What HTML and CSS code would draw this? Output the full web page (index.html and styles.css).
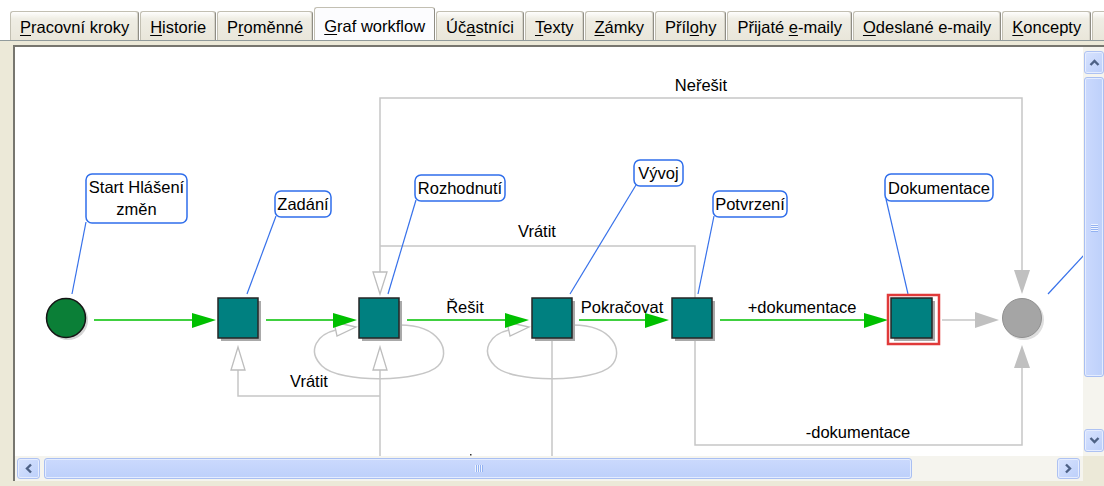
FILE: index.html
```html
<!DOCTYPE html>
<html lang="cs">
<head>
    <meta charset="UTF-8">
    <title>Graf workflow</title>
    <link rel="stylesheet" href="styles.css">
</head>
<body>
    <div class="tabs">
        <div class="tab"><u>P</u>racovní kroky</div>
        <div class="tab"><u>H</u>istorie</div>
        <div class="tab">P<u>r</u>oměnné</div>
        <div class="tab tab-active"><u>G</u>raf workflow</div>
        <div class="tab">Úč<u>a</u>stníci</div>
        <div class="tab"><u>T</u>exty</div>
        <div class="tab"><u>Z</u>ámky</div>
        <div class="tab">Příl<u>o</u>hy</div>
        <div class="tab">Přijaté <u>e</u>-maily</div>
        <div class="tab"><u>O</u>deslané e-maily</div>
        <div class="tab"><u>K</u>oncepty</div>
        <div class="tab tab-cut"></div>
    </div>

    <div class="panel">
        <div class="view">
            <div class="canvas">
                <!-- viewBox uses page coordinates: canvas starts at 15,47 -->
                <svg width="1068" height="409" viewBox="15 47 1068 409" font-family="Liberation Sans, Arial, sans-serif" font-size="16.5">
                    <!-- grey transitions -->
                    <g class="edge-grey" fill="none">
                        <path d="M380 272 V98 H1022 V270"/>
                        <path d="M695 298 V246 H380"/>
                        <path d="M380 456 V370"/>
                        <path d="M380 396 H238 V370"/>
                        <path d="M552 340 V456"/>
                        <path d="M695 340 V445 H1022 V368"/>
                        <path d="M942 320 H976"/>
                        <path d="M400 325 C440 325 452 352 438 366 C422 382 340 384 322 366 C306 350 318 334 336 330"/>
                        <path d="M573 325 C613 325 625 352 611 366 C595 382 513 384 495 366 C479 350 491 334 509 330"/>
                    </g>
                    <g class="head-open">
                        <polygon points="373,272 387,272 380,294"/>
                        <polygon points="373,370 387,370 380,347"/>
                        <polygon points="231,370 245,370 238,347"/>
                        <polygon points="334,322 356,327 337,336"/>
                        <polygon points="507,322 529,327 510,336"/>
                    </g>
                    <g class="head-grey">
                        <polygon points="1014,270 1030,270 1022,294"/>
                        <polygon points="1014,368 1030,368 1022,345"/>
                        <polygon points="975,312 975,328 999,320"/>
                    </g>

                    <!-- green transitions -->
                    <g class="edge-green">
                        <path d="M94 320 H194"/>
                        <path d="M266 320 H336"/>
                        <path d="M407 320 H508"/>
                        <path d="M579 320 H648"/>
                        <path d="M720 320 H866"/>
                    </g>
                    <g class="head-green">
                        <polygon points="192,313 216,320 192,328"/>
                        <polygon points="333,313 357,320 333,328"/>
                        <polygon points="505,313 529,320 505,328"/>
                        <polygon points="645,313 669,320 645,328"/>
                        <polygon points="864,313 888,320 864,328"/>
                    </g>

                    <!-- label leaders -->
                    <g class="leader">
                        <path d="M86 222 L72 294"/>
                        <path d="M276 216 L247 294"/>
                        <path d="M416 200 L388 294"/>
                        <path d="M636 185 L570 294"/>
                        <path d="M714 216 L698 294"/>
                        <path d="M886 199 L908 294"/>
                        <path d="M1048 294 L1084 255"/>
                    </g>

                    <!-- nodes -->
                    <circle cx="68" cy="320" r="20" fill="#d4d4d4"/>
                    <circle cx="66" cy="318" r="19.5" class="node-start"/>

                    <rect x="221" y="301" width="40" height="40" class="shadow"/>
                    <rect x="218" y="298" width="40" height="40" class="node"/>
                    <rect x="362" y="301" width="40" height="40" class="shadow"/>
                    <rect x="359" y="298" width="40" height="40" class="node"/>
                    <rect x="535" y="301" width="40" height="40" class="shadow"/>
                    <rect x="532" y="298" width="40" height="40" class="node"/>
                    <rect x="675" y="301" width="40" height="40" class="shadow"/>
                    <rect x="672" y="298" width="40" height="40" class="node"/>

                    <rect x="888" y="295" width="51" height="49" class="selected"/>
                    <rect x="894" y="301" width="41" height="40" class="shadow"/>
                    <rect x="891" y="298" width="41" height="40" class="node"/>

                    <circle cx="1024" cy="320" r="20" fill="#dedede"/>
                    <circle cx="1022" cy="318" r="19.5" class="node-end"/>

                    <!-- callouts -->
                    <g class="callout">
                        <rect x="86" y="174" width="101" height="49" rx="6"/>
                        <rect x="275" y="191" width="56" height="26" rx="6"/>
                        <rect x="415" y="175" width="90" height="26" rx="6"/>
                        <rect x="634" y="160" width="49" height="26" rx="6"/>
                        <rect x="713" y="191" width="74" height="26" rx="6"/>
                        <rect x="885" y="174" width="108" height="27" rx="6"/>
                    </g>
                    <g text-anchor="middle" fill="#000">
                        <text x="136.5" y="193">Start Hlášení</text>
                        <text x="136.5" y="215">změn</text>
                        <text x="303" y="210">Zadání</text>
                        <text x="460" y="194">Rozhodnutí</text>
                        <text x="658.5" y="179">Vývoj</text>
                        <text x="750" y="210">Potvrzení</text>
                        <text x="939" y="194">Dokumentace</text>

                        <text x="701" y="91">Neřešit</text>
                        <text x="537" y="237">Vrátit</text>
                        <text x="465" y="313">Řešit</text>
                        <text x="622" y="313">Pokračovat</text>
                        <text x="802" y="313">+dokumentace</text>
                        <text x="309" y="387">Vrátit</text>
                        <text x="858" y="438">-dokumentace</text>
                    </g>
                    <rect x="470" y="454" width="1.5" height="1.5" fill="#333"/>
                </svg>
            </div>

            <div class="vscroll">
                <div class="sbtn">
                    <svg width="11" height="7" viewBox="0 0 11 7"><polyline points="1.5,6 5.5,2 9.5,6" class="chev"/></svg>
                </div>
                <div class="thumb thumb-v">
                    <svg width="9" height="9" viewBox="0 0 9 9" class="grip">
                        <path d="M1 1.5 H8 M1 3.5 H8 M1 5.5 H8 M1 7.5 H8" stroke="#eef3fe"/>
                        <path d="M1 2.5 H8 M1 4.5 H8 M1 6.5 H8 M1 8.5 H8" stroke="#93b2f2"/>
                    </svg>
                </div>
                <div class="sbtn sbtn-end">
                    <svg width="11" height="7" viewBox="0 0 11 7"><polyline points="1.5,1 5.5,5 9.5,1" class="chev"/></svg>
                </div>
            </div>

            <div class="hscroll">
                <div class="sbtn">
                    <svg width="7" height="11" viewBox="0 0 7 11"><polyline points="6,1.5 2,5.5 6,9.5" class="chev"/></svg>
                </div>
                <div class="thumb thumb-h">
                    <svg width="9" height="9" viewBox="0 0 9 9" class="grip">
                        <path d="M1.5 1 V8 M3.5 1 V8 M5.5 1 V8 M7.5 1 V8" stroke="#eef3fe"/>
                        <path d="M2.5 1 V8 M4.5 1 V8 M6.5 1 V8 M8.5 1 V8" stroke="#93b2f2"/>
                    </svg>
                </div>
                <div class="sbtn sbtn-end">
                    <svg width="7" height="11" viewBox="0 0 7 11"><polyline points="1,1.5 5,5.5 1,9.5" class="chev"/></svg>
                </div>
            </div>

            <div class="corner"></div>
        </div>
    </div>
</body>
</html>
```

FILE: styles.css
```css
html, body {
    margin: 0;
    height: 486px;
    overflow: hidden;
}
body {
    background-color: #fff;
    font-family: "Liberation Sans", Arial, sans-serif;
    font-size: 16.5px;
    color: #000;
}

/* --- tab strip --- */
.tabs {
    display: flex;
    align-items: flex-end;
    gap: 1px;
    height: 29px;
    padding: 11px 0 0 10px;
    white-space: nowrap;
    overflow: hidden;
}
.tab {
    flex: none;
    box-sizing: border-box;
    height: 29px;
    padding: 6px 9px 0;
    line-height: 18px;
    background: linear-gradient(#fefefd, #efede4 25%, #e9e6da);
    border: 1px solid #c2bfb2;
    border-bottom: none;
    border-right-color: #8f8d84;
    border-radius: 3px 3px 0 0;
    box-shadow: inset -1px 0 0 #d6d3c8;
}
.tab u {
    text-underline-offset: 2px;
}
.tab-active {
    position: relative;
    z-index: 1;
    height: 34px;
    margin-bottom: -1px;
    padding-top: 9px;
    background: #fcfcfe;
    box-shadow: none;
}
.tab-cut {
    width: 20px;
}

/* --- panel and view --- */
.panel {
    border-top: 1px solid #919b9c;
    background-color: #ece9d8;
    padding: 4px 0 5px 13px;
}
.view {
    display: grid;
    grid-template-columns: 1068px 21px;
    grid-template-rows: 409px 25px;
    border-top: 2px solid #77766f;
    border-left: 2px solid #77766f;
}
.canvas {
    background-color: #fff;
    overflow: hidden;
}
.canvas svg {
    display: block;
}

.edge-grey path {
    stroke: #c6c6c6;
    stroke-width: 1.5;
}
.head-open polygon {
    fill: #fff;
    stroke: #bdbdbd;
    stroke-width: 1.3;
}
.head-grey polygon {
    fill: #c0c0c0;
}
.edge-green path {
    stroke: #00c000;
    stroke-width: 1.6;
    fill: none;
}
.head-green polygon {
    fill: #00c000;
}
.leader path {
    stroke: #3771ea;
    stroke-width: 1.2;
    fill: none;
}
.callout rect {
    fill: #fff;
    stroke: #2f6eeb;
    stroke-width: 1.5;
}
.node {
    fill: #008080;
    stroke: #262626;
    stroke-width: 1.5;
}
.shadow {
    fill: #a9a9a9;
}
.selected {
    fill: #fff;
    stroke: #e03a3a;
    stroke-width: 2.5;
}
.node-start {
    fill: #0b7f37;
    stroke: #151515;
    stroke-width: 1.5;
}
.node-end {
    fill: #a5a5a5;
    stroke: #909090;
    stroke-width: 1;
}

/* --- scrollbars --- */
.vscroll {
    display: flex;
    flex-direction: column;
    gap: 3px;
    padding: 4px 0 4px 1px;
    background-color: #f5f4ee;
}
.hscroll {
    display: flex;
    align-items: center;
    gap: 4px;
    padding: 2px 3px 2px 2px;
    background-color: #f5f4ee;
}
.sbtn {
    flex: none;
    display: flex;
    align-items: center;
    justify-content: center;
    box-sizing: border-box;
    width: 20px;
    height: 23px;
    background: linear-gradient(135deg, #d8e3fe, #bccffa);
    border: 1px solid #aec2f2;
    border-radius: 3px;
    box-shadow: inset 0 0 0 1px #e6edfe;
}
.hscroll .sbtn {
    width: 23px;
    height: 21px;
}
.sbtn-end {
    margin-top: auto;
}
.hscroll .sbtn-end {
    margin-top: 0;
    margin-left: auto;
}
.chev {
    fill: none;
    stroke: #4d6185;
    stroke-width: 2.4;
}
.thumb {
    display: flex;
    align-items: center;
    justify-content: center;
    box-sizing: border-box;
    border: 1px solid #a9bff2;
    border-radius: 3px;
    box-shadow: inset 0 0 0 1px #e4ecfe;
}
.thumb-v {
    width: 20px;
    height: 300px;
    background: linear-gradient(90deg, #cbd9fd, #bdd0fa);
}
.thumb-h {
    width: 868px;
    height: 21px;
    background: linear-gradient(#cbd9fd, #bdd0fa);
}
.grip {
    display: block;
}
.corner {
    background-color: #ece9d8;
}
```
